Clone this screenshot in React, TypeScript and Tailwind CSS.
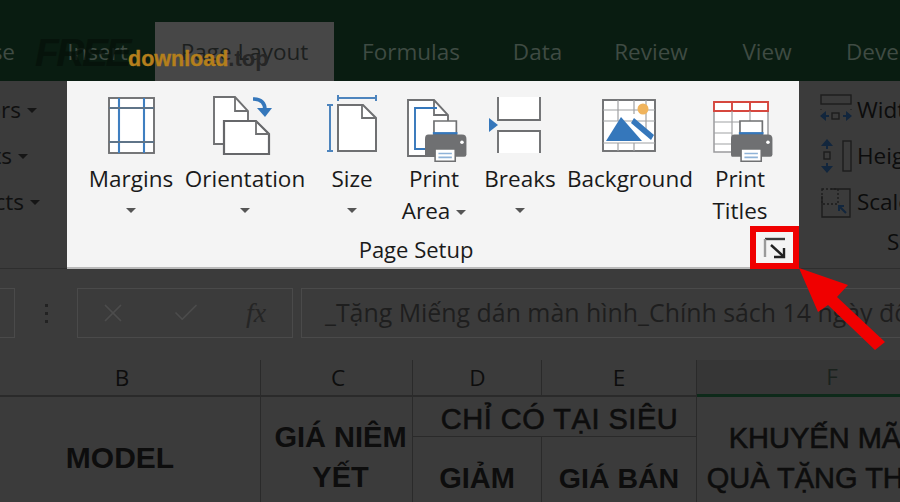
import { X, Check } from "lucide-react";

const tabs = [
  { label: "Insert", w: "w-[113px] pr-[2px]" },
  { label: "Page Layout", w: "w-[179px]", active: true },
  { label: "Formulas", w: "w-[154px]" },
  { label: "Data", w: "w-[99px]" },
  { label: "Review", w: "w-[128px]" },
  { label: "View", w: "w-[104px]" },
];

function Caret({ className = "" }: { className?: string }) {
  return <span className={`inline-block w-0 h-0 border-x-[5px] border-x-transparent border-t-[5px] ${className}`} />;
}

function MarginsIcon() {
  return (
    <svg width="48" height="62" viewBox="0 0 48 62" fill="none" className="ml-[2px]">
      <rect x="1" y="4" width="45" height="55" fill="#fff" stroke="#6f7072" strokeWidth="1.9" />
      <path d="M11 4v55M36 4v55" stroke="#3f7fc0" strokeWidth="2.1" />
      <path d="M1 14h45M1 48h45" stroke="#5f7488" strokeWidth="1.9" />
    </svg>
  );
}

function OrientationIcon() {
  return (
    <svg width="66" height="62" viewBox="0 0 66 62" fill="none">
      <path d="M26 50H2V3h21l13 14v14" fill="#fff" stroke="#6f7072" strokeWidth="1.9" />
      <path d="M23 3v14h13" stroke="#6f7072" strokeWidth="1.8" />
      <path d="M12 27h32l13 13v20H12z" fill="#fff" stroke="#66676a" strokeWidth="2.2" />
      <path d="M44 27v13h13" stroke="#6f7072" strokeWidth="1.8" />
      <path d="M41 5c8 0 12 4 12 11" stroke="#3577bb" strokeWidth="3.6" />
      <path d="M45 14h15l-7 9z" fill="#3577bb" />
    </svg>
  );
}

function SizeIcon() {
  return (
    <svg width="50" height="62" viewBox="0 0 50 62" fill="none">
      <path d="M11 4h38M11 1v6M49 1v6" stroke="#4d84bd" strokeWidth="2" />
      <path d="M3 11v46M0 11h6M0 57h6" stroke="#4d84bd" strokeWidth="2" />
      <path d="M11 11h25l13 13v33H11z" fill="#fff" stroke="#6f7072" strokeWidth="2" />
      <path d="M35 11v13h14" stroke="#6f7072" strokeWidth="1.8" />
    </svg>
  );
}

function PrinterPart({ x, y }: { x: number; y: number }) {
  return (
    <g transform={`translate(${x} ${y}) scale(1.12)`}>
      <path d="M8 0h20v12H8z" fill="#fff" stroke="#6f7072" strokeWidth="1.5" />
      <path d="M7 11h22" stroke="#3577bb" strokeWidth="2.2" />
      <path d="M3 12h30q4 0 4 4v14q0 2-2 2H1q-1 0-1-2V16q0-4 3-4z" fill="#6f7072" />
      <circle cx="33" cy="19" r="1.6" fill="#fff" />
      <path d="M9 25h18v11H9z" fill="#fff" stroke="#6f7072" strokeWidth="1.4" />
      <path d="M12 29h12M12 32.5h12" stroke="#8fb3d8" strokeWidth="1.4" />
    </g>
  );
}

function PrintAreaIcon() {
  return (
    <svg width="62" height="66" viewBox="0 0 62 66" fill="none" className="ml-[8px] mt-[4px]">
      <path d="M1 2h26l14 15v41H1z" fill="#fff" stroke="#6f7072" strokeWidth="1.9" />
      <path d="M27 2v15h14" stroke="#6f7072" strokeWidth="1.8" />
      <path d="M30 10H8v41h16" stroke="#3577bb" strokeWidth="1.9" />
      <PrinterPart x={18} y={23} />
    </svg>
  );
}

function BreaksIcon() {
  return (
    <svg width="52" height="62" viewBox="0 0 52 62" fill="none" className="mr-[10px]">
      <path d="M9 3h42v23H9zM9 37h42v22H9z" fill="#fff" />
      <path d="M9 3v23h42V3M9 59V37h42v22" stroke="#6f7072" strokeWidth="1.9" />
      <path d="M0 24l9 7-9 7z" fill="#3577bb" />
    </svg>
  );
}

function BackgroundIcon() {
  return (
    <svg width="56" height="62" viewBox="0 0 56 62" fill="none">
      <rect x="1" y="6" width="52" height="51" fill="#fff" stroke="#6f7072" strokeWidth="1.9" />
      <path d="M1 16h52M1 27h52M16 6v21M32 6v14M1 49h52M16 49v8M32 49v8M44 6v35" stroke="#a0a1a3" strokeWidth="1.2" />
      <circle cx="41" cy="15" r="5.5" fill="#f0b45d" />
      <path d="M4 47L19 23l21 24z" fill="#3577bb" />
      <path d="M32 24l20 17-3 5-20-17z" fill="#3577bb" />
    </svg>
  );
}

function PrintTitlesIcon() {
  return (
    <svg width="60" height="66" viewBox="0 0 60 66" fill="none" className="ml-[6px] mt-[4px]">
      <path d="M1 4h54v50H1z" fill="#fff" stroke="#9a9b9d" strokeWidth="1.5" />
      <path d="M1 4h54v9H1zM19 4v9M37 4v9" fill="#fff" stroke="#d6473e" strokeWidth="1.9" />
      <path d="M1 24h26M1 35h18M1 46h18M19 13v30M37 13v10" stroke="#a0a1a3" strokeWidth="1.2" />
      <PrinterPart x={18} y={23} />
    </svg>
  );
}

function RibbonButton({
  icon,
  lines,
  w,
  inlineCaret,
  noCaret,
}: {
  icon: React.ReactNode;
  lines: string[];
  w: string;
  inlineCaret?: boolean;
  noCaret?: boolean;
}) {
  return (
    <div className={`${w} flex flex-col items-center shrink-0`}>
      <div className="h-[62px] flex items-start justify-center">{icon}</div>
      <div className="mt-[7px] text-center leading-[32px] whitespace-nowrap text-[#1a1a1a]">
        {lines.map((l, i) => (
          <div key={l}>
            {l}
            {inlineCaret && i === lines.length - 1 && <Caret className="ml-[6px] align-middle border-t-[#555]" />}
          </div>
        ))}
      </div>
      {lines.length === 1 && !noCaret && <Caret className="mt-[13px] border-t-[#555]" />}
    </div>
  );
}

function SideRow({ text, pad }: { text: string; pad: string }) {
  return (
    <div className={`h-[46px] flex items-center justify-end gap-[6px] text-[#101010] ${pad}`}>
      <span>{text}</span>
      <Caret className="border-t-[#151515]" />
    </div>
  );
}

export default function App() {
  return (
    <div className="relative w-[900px] h-[502px] overflow-hidden bg-[#3b3b3b] text-[22.5px] font-['Open_Sans',sans-serif]">
      {/* tabs */}
      <div className="h-[81px] bg-[#091c11] flex items-end text-[#3f4b43] whitespace-nowrap">
        <div className="w-[42px] h-[59px] flex items-center justify-end pr-[27px]">se</div>
        {tabs.map((t) => (
          <div
            key={t.label}
            className={`${t.w} h-[59px] flex items-center justify-center shrink-0 ${t.active ? "bg-[#474747] text-[#1c1f1e]" : ""}`}
          >
            {t.label}
          </div>
        ))}
        <div className="pl-[27px] h-[59px] flex items-center">Developer</div>
      </div>

      {/* ribbon */}
      <div className="h-[188px] flex">
        <div className="w-[67px] shrink-0 pt-[6px] border-b border-[#2e2e2e] flex flex-col overflow-hidden">
          <SideRow text="ors" pad="pr-[30px]" />
          <SideRow text="ts" pad="pr-[39px]" />
          <SideRow text="cts" pad="pr-[27px]" />
        </div>

        <div className="relative w-[732px] shrink-0 bg-[#f4f4f4] border-b-2 border-[#b9b9b9] pl-[14px] pt-[13px]">
          <div className="flex">
            <RibbonButton w="w-[100px]" icon={<MarginsIcon />} lines={["Margins"]} />
            <RibbonButton w="w-[128px]" icon={<OrientationIcon />} lines={["Orientation"]} />
            <RibbonButton w="w-[86px]" icon={<SizeIcon />} lines={["Size"]} />
            <RibbonButton w="w-[78px]" icon={<PrintAreaIcon />} lines={["Print", "Area"]} inlineCaret />
            <RibbonButton w="w-[94px]" icon={<BreaksIcon />} lines={["Breaks"]} />
            <RibbonButton w="w-[126px]" icon={<BackgroundIcon />} lines={["Background"]} noCaret />
            <RibbonButton w="w-[94px]" icon={<PrintTitlesIcon />} lines={["Print", "Titles"]} />
          </div>

          <div className="absolute left-[14px] bottom-[1px] w-[670px] text-center text-[22px] text-[#1a1a1a]">Page Setup</div>

          {/* dialog launcher, boxed in red */}
          <div className="absolute right-0 bottom-[-2px] w-[49px] h-[43px] border-[6px] border-[#f00000] flex items-center justify-center">
            <svg width="26" height="24" viewBox="0 0 26 24" fill="none">
              <path d="M23 3H3" stroke="#3c3c3c" strokeWidth="2.4" />
              <path d="M3 3v18" stroke="#9a9a9a" strokeWidth="2.4" />
              <path d="M9 9l12 11" stroke="#222" strokeWidth="2.4" />
              <path d="M22 12v9H12" stroke="#222" strokeWidth="2.4" />
            </svg>
          </div>
        </div>

        <div className="flex-1 border-b border-[#2e2e2e] overflow-hidden pl-[20px] pt-[6px] text-[#0c0c0c] whitespace-nowrap">
          <div className="h-[46px] flex items-center gap-[4px]">
            <svg width="34" height="34" viewBox="0 0 34 34" fill="none" className="shrink-0">
              <rect x="2" y="2" width="30" height="9" stroke="#1d1d1d" strokeWidth="1.4" />
              <path d="M2 16v2M32 16v2" stroke="#1d1d1d" strokeDasharray="1 2" />
              <path d="M1 23l6-5v10zM33 23l-6-5v10z" fill="#12263d" />
              <path d="M7 23h3M24 23h3" stroke="#12263d" strokeWidth="2" />
              <rect x="13" y="20" width="7" height="6" stroke="#1d1d1d" strokeWidth="1.4" />
            </svg>
            <span>Width</span>
          </div>
          <div className="h-[46px] flex items-center gap-[4px]">
            <svg width="34" height="36" viewBox="0 0 34 36" fill="none" className="shrink-0">
              <rect x="24" y="3" width="8" height="30" stroke="#1d1d1d" strokeWidth="1.4" />
              <path d="M8 1l6 7H2zM8 35l6-7H2z" fill="#12263d" />
              <path d="M8 8v3M8 25v3" stroke="#12263d" strokeWidth="2" />
              <rect x="5" y="14" width="6" height="7" stroke="#1d1d1d" strokeWidth="1.4" />
            </svg>
            <span>Height</span>
          </div>
          <div className="h-[46px] flex items-center gap-[4px]">
            <svg width="34" height="32" viewBox="0 0 34 32" fill="none" className="shrink-0">
              <path d="M3 10v21h28V3H12" stroke="#1d1d1d" strokeWidth="1.4" />
              <rect x="3" y="3" width="16" height="15" stroke="#1d1d1d" strokeWidth="1.4" strokeDasharray="2 2" />
              <path d="M27 27l-7-7M20 25v-5h5" stroke="#12263d" strokeWidth="2" />
            </svg>
            <span>Scale</span>
          </div>
          <div className="pl-[68px] mt-[2px] leading-[30px]">S</div>
        </div>
      </div>

      {/* formula bar */}
      <div className="h-[91px] pt-[19px] flex items-start text-[#1e1e1e] whitespace-nowrap">
        <div className="w-[15px] h-[50px] border border-l-0 border-[#4a4a4a]" />
        <div className="w-[62px] h-[50px] flex flex-col items-center justify-center gap-[5px]">
          <span className="w-[3px] h-[3px] bg-[#222]" />
          <span className="w-[3px] h-[3px] bg-[#222]" />
          <span className="w-[3px] h-[3px] bg-[#222]" />
        </div>
        <div className="w-[216px] h-[50px] border border-[#4a4a4a] flex items-center pl-[20px] text-[#252525]">
          <X size={30} strokeWidth={1.4} className="text-[#4c4c4c]" />
          <Check size={30} strokeWidth={1.4} className="ml-[43px] text-[#4c4c4c]" />
          <span className="ml-[45px] font-['Liberation_Serif',serif] italic text-[28px]">fx</span>
        </div>
        <div className="ml-[8px] flex-1 h-[50px] border border-r-0 border-[#4a4a4a] flex items-center pl-[23px] overflow-hidden text-[24.9px]">
          _Tặng Miếng dán màn hình_Chính sách 14 ngày đổi trả
        </div>
      </div>

      {/* sheet */}
      <div className="grid grid-cols-[261px_152px_129px_155px_270px] grid-rows-[37px_40px_1fr] h-[142px] text-[#0d0d0d]">
        <div className="flex items-center justify-center border-r border-b-2 border-[#2a2a2a] pr-[16px]">B</div>
        <div className="flex items-center justify-center border-r border-b-2 border-[#2a2a2a] pl-[3px]">C</div>
        <div className="flex items-center justify-center border-r border-b-2 border-[#2a2a2a] pl-[1px]">D</div>
        <div className="flex items-center justify-center border-r border-b-2 border-[#2a2a2a]">E</div>
        <div className="flex items-center justify-center border-b-[3px] border-[#0e2a1a] bg-[#363636] text-[#1a221d]">F</div>

        <div className="contents font-['Liberation_Sans',sans-serif] font-bold text-[29px]">
          <div className="row-span-2 flex items-center justify-center border-r border-[#2a2a2a] pr-[20px] pt-[15px] text-[30px]">MODEL</div>
          <div className="row-span-2 flex flex-col items-center justify-start pt-[20px] pl-[8px] border-r border-[#2a2a2a] leading-[40px] whitespace-nowrap">
            <span>GIÁ NIÊM</span>
            <span>YẾT</span>
          </div>
          <div className="col-span-2 flex items-center justify-center pl-[10px] pt-[6px] border-r border-b border-[#2a2a2a] whitespace-nowrap font-normal tracking-[0.5px] [-webkit-text-stroke:0.6px_#0d0d0d]">
            CHỈ CÓ TẠI SIÊU
          </div>
          <div className="row-span-2 flex flex-col items-center justify-start pt-[21px] leading-[40px] whitespace-nowrap font-normal [-webkit-text-stroke:0.6px_#0d0d0d]">
            <span className="mr-[26px]">KHUYẾN MÃI</span>
            <span className="mr-[10px]">QUÀ TẶNG THÊM</span>
          </div>
          <div className="flex items-start justify-center pt-[20px] border-r border-[#2a2a2a] whitespace-nowrap">GIẢM</div>
          <div className="flex items-start justify-center pt-[20px] border-r border-[#2a2a2a] whitespace-nowrap text-[28.5px]">GIÁ BÁN</div>
        </div>
      </div>

      {/* watermark over the tabs */}
      <div className="absolute left-[35px] top-[33px] flex items-baseline leading-none whitespace-nowrap font-['Liberation_Sans',sans-serif] font-bold">
        <span className="text-[39px] italic text-[#06120a] opacity-80 tracking-[-2.5px]">FREE</span>
        <span className="text-[21.5px] text-[#b47f1c] -ml-[1px] [-webkit-text-stroke:0.4px_#b47f1c]">download</span>
        <span className="text-[22px] text-[#262626]">.top</span>
      </div>

      {/* pointer */}
      <svg className="absolute left-[790px] top-[260px]" width="110" height="100" viewBox="790 260 110 100">
        <path d="M799 268L848 285 837 297 885 342 875 350 828 305 818 312z" fill="#f00000" />
      </svg>
    </div>
  );
}
